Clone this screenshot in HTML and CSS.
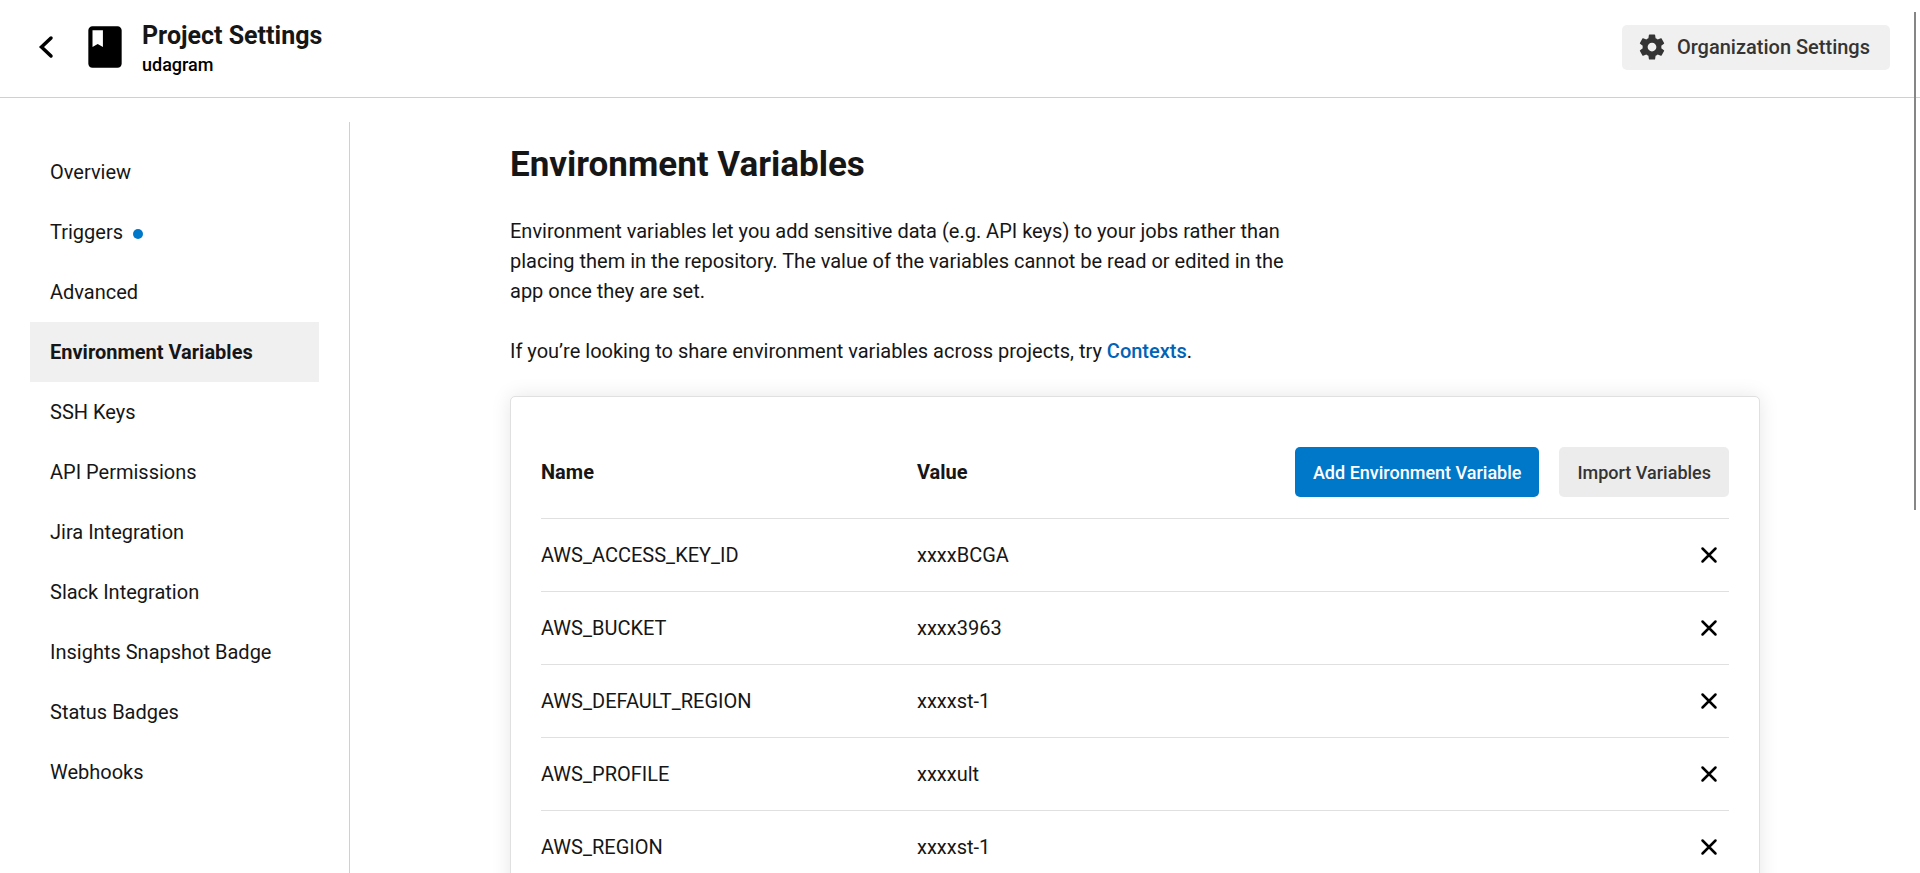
FILE: index.html
```html
<!DOCTYPE html>
<html lang="en">
<head>
<meta charset="utf-8">
<meta name="viewport" content="width=device-width, initial-scale=1">
<title>Project Settings - udagram</title>
<link rel="stylesheet" href="styles.css">
</head>
<body class="app">
<svg class="sprite" aria-hidden="true">
  <symbol id="close" viewBox="0 0 20 20">
    <path d="M3.5 3.5l13 13M16.500 3.500l-13 13" fill="none" stroke="currentColor" stroke-width="2.500" stroke-linecap="round"/>
  </symbol>
</svg>

<header class="header">
  <button class="back" type="button" aria-label="Back">
    <svg width="16" height="24" viewBox="0 0 16 24" aria-hidden="true"><path d="M13 3L3.500 12l9.500 9" fill="none" stroke="currentColor" stroke-width="3.500" stroke-linecap="round" stroke-linejoin="miter"/></svg>
  </button>
  <svg class="project-icon" viewBox="0 0 24 24" aria-hidden="true"><path d="M18 2H6c-1.100 0-2 .9-2 2v16c0 1.100.9 2 2 2h12c1.100 0 2-.9 2-2V4c0-1.100-.9-2-2-2zM6 4h5v8l-2.500-1.500L6 12V4z"/></svg>
  <div class="heading">
    <div class="heading-title">Project Settings</div>
    <div class="heading-project">udagram</div>
  </div>
  <a class="org-link" href="#organization">
    <svg class="gear" viewBox="0 0 24 24" fill="currentColor" aria-hidden="true"><path d="M19.430 12.980c.04-.32.070-.64.070-.98s-.03-.66-.07-.98l2.110-1.650c.19-.15.240-.42.120-.64l-2-3.460c-.12-.22-.39-.3-.61-.22l-2.490 1c-.52-.4-1.080-.73-1.690-.98l-.38-2.650C14.460 2.180 14.250 2 14 2h-4c-.25 0-.46.18-.49.42l-.38 2.650c-.61.25-1.170.59-1.690.98l-2.490-1c-.23-.09-.49 0-.61.22l-2 3.460c-.13.22-.07.49.12.64l2.110 1.650c-.04.32-.07.65-.07.98s.03.66.07.98l-2.110 1.650c-.19.15-.24.42-.12.64l2 3.460c.12.22.39.3.61.22l2.490-1c.52.4 1.080.73 1.690.98l.38 2.650c.03.24.24.42.49.42h4c.25 0 .46-.18.49-.42l.38-2.650c.61-.25 1.170-.59 1.690-.98l2.490 1c.23.09.49 0 .61-.22l2-3.460c.12-.22.07-.49-.12-.64l-2.110-1.650zM12 15.500c-1.930 0-3.500-1.570-3.500-3.500s1.570-3.500 3.500-3.500 3.500 1.570 3.500 3.500-1.570 3.500-3.500 3.500z"/></svg>
    Organization Settings
  </a>
</header>

<div class="layout">
  <nav class="sidebar" aria-label="Project settings">
    <a class="nav-item" href="#overview">Overview</a>
    <a class="nav-item" href="#triggers">Triggers<span class="dot"></span></a>
    <a class="nav-item" href="#advanced">Advanced</a>
    <a class="nav-item nav-item-active" href="#environment" aria-current="page">Environment Variables</a>
    <a class="nav-item" href="#ssh">SSH Keys</a>
    <a class="nav-item" href="#api">API Permissions</a>
    <a class="nav-item" href="#jira">Jira Integration</a>
    <a class="nav-item" href="#slack">Slack Integration</a>
    <a class="nav-item" href="#insights">Insights Snapshot Badge</a>
    <a class="nav-item" href="#status">Status Badges</a>
    <a class="nav-item" href="#webhooks">Webhooks</a>
  </nav>

  <main class="main">
    <div class="content">
      <h1 class="title">Environment Variables</h1>
      <p class="intro">Environment variables let you add sensitive data (e.g. API keys) to your jobs rather than placing them in the repository. The value of the variables cannot be read or edited in the app once they are set.</p>
      <p class="intro">If you’re looking to share environment variables across projects, try <a class="link" href="#contexts">Contexts</a>.</p>

      <section class="card">
        <table class="vars">
          <thead>
            <tr>
              <th class="col-name" scope="col">Name</th>
              <th class="col-value" scope="col">Value</th>
              <td>
                <div class="actions">
                  <button class="btn btn-primary" type="button">Add Environment Variable</button>
                  <button class="btn" type="button">Import Variables</button>
                </div>
              </td>
            </tr>
          </thead>
          <tbody>
            <tr><td>AWS_ACCESS_KEY_ID</td><td>xxxxBCGA</td><td><button class="remove" type="button" aria-label="Remove AWS_ACCESS_KEY_ID"><svg class="remove-icon"><use href="#close"/></svg></button></td></tr>
            <tr><td>AWS_BUCKET</td><td>xxxx3963</td><td><button class="remove" type="button" aria-label="Remove AWS_BUCKET"><svg class="remove-icon"><use href="#close"/></svg></button></td></tr>
            <tr><td>AWS_DEFAULT_REGION</td><td>xxxxst-1</td><td><button class="remove" type="button" aria-label="Remove AWS_DEFAULT_REGION"><svg class="remove-icon"><use href="#close"/></svg></button></td></tr>
            <tr><td>AWS_PROFILE</td><td>xxxxult</td><td><button class="remove" type="button" aria-label="Remove AWS_PROFILE"><svg class="remove-icon"><use href="#close"/></svg></button></td></tr>
            <tr><td>AWS_REGION</td><td>xxxxst-1</td><td><button class="remove" type="button" aria-label="Remove AWS_REGION"><svg class="remove-icon"><use href="#close"/></svg></button></td></tr>
          </tbody>
        </table>
      </section>
    </div>
  </main>
</div>
<div class="scroll-thumb"></div>
</body>
</html>
```

FILE: styles.css
```css
* {
  box-sizing: border-box;
}

.app {
  position: relative;
  display: flex;
  flex-direction: column;
  height: 100vh;
  margin: 0;
  overflow: hidden;
  background: #fff;
  color: #161616;
  font-family: Roboto, sans-serif;
  font-size: 20px;
  line-height: 30px;
}

.sprite {
  position: absolute;
  width: 0;
  height: 0;
}

/* Header */
.header {
  display: flex;
  flex-shrink: 0;
  align-items: center;
  padding: 16px 30px 19px;
  border-bottom: 1px solid #d0d0d0;
}

.back {
  display: flex;
  padding: 0 8px;
  border: 0;
  background: none;
  color: #000;
}

.project-icon {
  width: 50px;
  height: 50px;
  margin: 0 12px 0 18px;
}

.heading {
  padding-top: 4px;
}

.heading-title {
  font-size: 25px;
  font-weight: 700;
  line-height: 32px;
}

.heading-project {
  color: #000;
  font-size: 18px;
  font-weight: 500;
  line-height: 26px;
}

.org-link {
  display: flex;
  align-items: center;
  gap: 10px;
  height: 45px;
  margin-left: auto;
  padding: 0 20px 0 15px;
  border-radius: 5px;
  background: #f0f0f0;
  color: #343434;
  font-weight: 500;
  text-decoration: none;
}

.gear {
  width: 30px;
  height: 30px;
}

/* Sidebar */
.layout {
  display: flex;
  flex: 1;
  min-height: 0;
  padding-top: 24px;
}

.sidebar {
  flex: 0 0 350px;
  padding: 20px 30px;
  border-right: 1px solid #d0d0d0;
}

.nav-item {
  display: flex;
  align-items: center;
  padding: 15px 20px;
  color: inherit;
  text-decoration: none;
}

.nav-item-active {
  background: #f0f0f0;
  font-weight: 700;
}

.dot {
  width: 10px;
  height: 10px;
  margin: 4px 0 0 10px;
  border-radius: 50%;
  background: #0078ca;
}

/* Content */
.main {
  flex: 1;
  padding: 18px 40px 0;
}

.content {
  max-width: 1250px;
  margin: 0 auto;
}

.title {
  margin: 0 0 26px;
  font-size: 35px;
  font-weight: 700;
  line-height: 50px;
}

.intro {
  max-width: 800px;
  margin: 0 0 30px;
}

.link {
  color: #0063b5;
  font-weight: 500;
  text-decoration: none;
}

.card {
  padding: 30px;
  border: 1px solid #e0e0e0;
  border-radius: 5px;
  background: #fff;
  box-shadow: 0 0 20px rgba(0, 0, 0, 0.1);
}

.vars {
  width: 100%;
  border-collapse: separate;
  border-spacing: 0;
}

.vars th,
.vars td {
  padding: 0;
  border-bottom: 1px solid #e0e0e0;
  text-align: left;
}

.vars thead th,
.vars thead td {
  padding: 20px 0 21px;
}

.vars tbody td {
  height: 73px;
}

.col-name {
  width: 376px;
}

.actions {
  display: flex;
  justify-content: flex-end;
  gap: 20px;
}

.btn {
  height: 50px;
  padding: 0 18px;
  border: 0;
  border-radius: 5px;
  background: #ececec;
  color: #343434;
  font-family: inherit;
  font-size: 18px;
  font-weight: 500;
  white-space: nowrap;
}

.btn-primary {
  background: #0078ca;
  color: #fff;
}

.remove {
  display: flex;
  align-items: center;
  justify-content: center;
  width: 40px;
  height: 40px;
  margin-left: auto;
  padding: 0;
  border: 0;
  background: none;
  color: #000;
}

.remove-icon {
  width: 20px;
  height: 20px;
}

/* Overlay scroll indicator */
.scroll-thumb {
  position: absolute;
  top: 12px;
  right: 4px;
  width: 2px;
  height: 57%;
  background: #868686;
}
```
